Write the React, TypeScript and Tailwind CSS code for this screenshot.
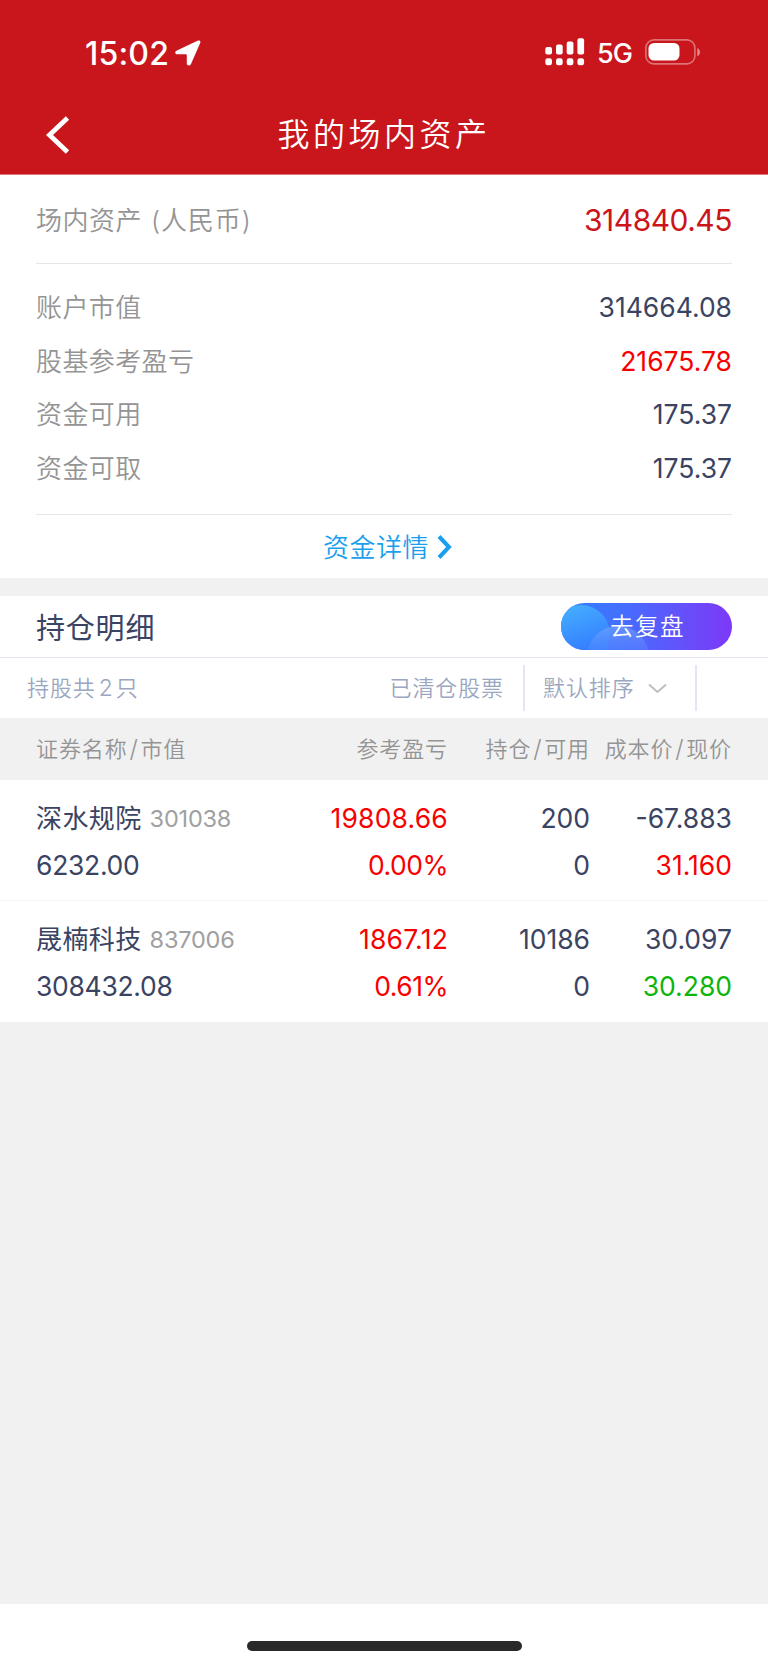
import { clsx } from "clsx";

type Tone = "ink" | "red" | "brand" | "green";

const tones: Record<Tone, string> = {
  ink: "text-[#3a4362]",
  red: "text-[#f80000]",
  brand: "text-[#cb151b]",
  green: "text-[#0cb40c]",
};

const summary: { label: string; value: string; tone: Tone }[] = [
  { label: "账户市值", value: "314664.08", tone: "ink" },
  { label: "股基参考盈亏", value: "21675.78", tone: "red" },
  { label: "资金可用", value: "175.37", tone: "ink" },
  { label: "资金可取", value: "175.37", tone: "ink" },
];

const holdings: {
  name: string;
  code: string;
  marketValue: string;
  profit: string;
  percent: string;
  amount: string;
  usable: string;
  cost: string;
  price: string;
  priceTone: Tone;
}[] = [
  {
    name: "深水规院",
    code: "301038",
    marketValue: "6232.00",
    profit: "19808.66",
    percent: "0.00%",
    amount: "200",
    usable: "0",
    cost: "-67.883",
    price: "31.160",
    priceTone: "red",
  },
  {
    name: "晟楠科技",
    code: "837006",
    marketValue: "308432.08",
    profit: "1867.12",
    percent: "0.61%",
    amount: "10186",
    usable: "0",
    cost: "30.097",
    price: "30.280",
    priceTone: "green",
  },
];

const StatusBar = () => (
  <div className="flex h-[104px] items-center justify-between pl-[85px] pr-[67px] text-white">
    <div className="flex items-center gap-[6px] pt-px">
      <span className="pt-[2px] text-[32px] font-[550] leading-[38px] tracking-[0.200px]">15:02</span>
      <svg width="26" height="26" viewBox="0 0 26 26" fill="currentColor">
        <path d="M1.400 10.700 23 .6c1.600-.7 2.900.6 2.300 2.100L15.900 24.300c-.9 1.900-4.100 1.700-4.100-.7v-8.300c0-.7-.4-1.100-1.100-1.100H2.300c-2.400 0-2.700-2.700-.9-3.500Z" />
      </svg>
    </div>
    <div className="flex items-center">
      <svg width="40" height="28" viewBox="0 0 40 28" fill="currentColor">
        <rect x="0.300" y="9" width="6.700" height="7.500" rx="2" />
        <rect x="11" y="6.500" width="6.700" height="10" rx="2" />
        <rect x="21.700" y="3.500" width="6.700" height="13" rx="2" />
        <rect x="32.400" y="0.300" width="6.700" height="16.200" rx="2" />
        <rect x="0.300" y="20.300" width="6.700" height="7" rx="2.400" />
        <rect x="11" y="20.300" width="6.700" height="7" rx="2.400" />
        <rect x="21.700" y="20.300" width="6.700" height="7" rx="2.400" />
        <rect x="32.400" y="20.300" width="6.700" height="7" rx="2.400" />
      </svg>
      <span className="ml-[12px] w-[36px] pt-[3px] text-[27px] font-[450] leading-8 tracking-[-0.900px]">5G</span>
      <svg className="ml-[12px]" width="56" height="26" viewBox="0 0 56 26" fill="none">
        <rect x="0.900" y="0.900" width="49" height="24" rx="8" stroke="#fff" strokeOpacity="0.400" strokeWidth="1.600" />
        <rect x="3.500" y="4" width="31" height="17.600" rx="5.500" fill="#fff" />
        <path d="M52.300 9v8.500c1.600-.7 2.700-2.300 2.700-4.200s-1.100-3.600-2.700-4.300Z" fill="#fff" fillOpacity="0.500" />
      </svg>
    </div>
  </div>
);

const TitleBar = () => (
  <div className="grid h-[62px] grid-cols-[140px_1fr_140px] items-center text-white">
    <svg className="ml-[46px]" width="24" height="38" viewBox="0 0 24 38" fill="none">
      <path d="M21.500 2 3.500 19l18 17" stroke="currentColor" strokeWidth="4.800" />
    </svg>
    <h1 className="text-center text-[32px] font-[350] leading-[40px] tracking-[3.500px]">我的场内资产</h1>
  </div>
);

const ReviewButton = () => (
  <button className="relative h-[47px] w-[171px] overflow-hidden rounded-full">
    <svg className="absolute inset-0" width="171" height="47" viewBox="0 0 171 47">
      <defs>
        <linearGradient id="base" x1="0" x2="1" y1="0" y2="0">
          <stop offset="0" stopColor="#3180ff" />
          <stop offset="0.350" stopColor="#446ffe" />
          <stop offset="1" stopColor="#7e38f8" />
        </linearGradient>
        <linearGradient id="big" x1="0" x2="0.350" y1="0" y2="1">
          <stop offset="0" stopColor="#47b4ff" />
          <stop offset="0.850" stopColor="#3580ff" />
        </linearGradient>
        <linearGradient id="small" x1="0" x2="0" y1="0" y2="1">
          <stop offset="0" stopColor="#7aa8ff" stopOpacity="0.600" />
          <stop offset="0.450" stopColor="#5a8cff" stopOpacity="0.300" />
        </linearGradient>
      </defs>
      <rect width="171" height="47" fill="url(#base)" />
      <circle cx="20" cy="31" r="29" fill="url(#big)" />
      <circle cx="57" cy="54" r="31" fill="url(#small)" />
    </svg>
    <span className="relative pl-[2px] text-[23.500px] font-[350] leading-[46px] tracking-[1.500px] text-white">去复盘</span>
  </button>
);

const Slash = () => <span className="mx-[1.800px] inline-block text-[24px] leading-none">/</span>;

const Holding = ({ item }: { item: (typeof holdings)[number] }) => (
  <div className="grid h-[121px] grid-cols-[245px_167px_142px_142px] content-center gap-y-[6px] border-b border-[#f5f5f5] px-9 pt-[2px] text-right text-[26.500px] font-[370] leading-[40px] text-[#3a4362] last:border-b-0">
    <div className="flex text-left">
      <span className="pt-px text-[26px] tracking-[0.400px]">{item.name}</span>
      <span className="ml-[8px] pt-px text-[23.500px] tracking-[-0.200px] text-[#a0a0a0]">{item.code}</span>
    </div>
    <div className={clsx("tracking-[0.200px]", tones.red)}>{item.profit}</div>
    <div>{item.amount}</div>
    <div>{item.cost}</div>
    <div className="text-left tracking-[-0.300px]">{item.marketValue}</div>
    <div className={clsx("tracking-[-0.500px]", tones.red)}>{item.percent}</div>
    <div>{item.usable}</div>
    <div className={tones[item.priceTone]}>{item.price}</div>
  </div>
);

const App = () => {
  return (
    <div className="flex h-[1665px] w-[768px] flex-col bg-[#f1f1f1] font-[Inter,'Noto_Sans_CJK_SC',sans-serif]">
      <header className="h-[175px] border-b border-[#df757a] bg-[#c8161c]">
        <StatusBar />
        <TitleBar />
      </header>

      <section className="h-[403px] bg-white px-9">
        <div className="flex h-[89px] items-center justify-between border-b border-[#e6e6e6] pt-[2px]">
          <span className="text-[26px] font-[350] tracking-[0.500px] text-[#949494]">
            场内资产<span className="ml-[9px] tracking-[0.900px]">(人民币)</span>
          </span>
          <span className="text-[30px] font-[370] tracking-[-0.500px] text-[#cb151b]">314840.45</span>
        </div>
        <div className="h-[251px] border-b border-[#e6e6e6] pt-[17px]">
          {summary.map((row) => (
            <div key={row.label} className="flex h-[53.600px] items-center justify-between">
              <span className="text-[26px] font-[350] tracking-[0.400px] text-[#949494]">{row.label}</span>
              <span className={clsx("text-[26.500px] font-[370]", tones[row.tone])}>{row.value}</span>
            </div>
          ))}
        </div>
        <div className="flex h-[63px] items-center justify-center gap-[8px] pl-[7px] pt-px text-[#1a9fee]">
          <span className="text-[26px] font-[350] tracking-[0.500px]">资金详情</span>
          <svg width="15" height="24" viewBox="0 0 15 24" fill="none">
            <path d="M2 1.500 12 12 2 22.500" stroke="currentColor" strokeWidth="4" />
          </svg>
        </div>
      </section>

      <section className="mt-[18px] bg-white">
        <div className="flex h-[62px] items-center justify-between border-b border-[#dfe4f0] px-9">
          <h2 className="pt-[4px] text-[29px] font-[370] tracking-[0.800px] text-[#3a4362]">持仓明细</h2>
          <ReviewButton />
        </div>
        <div className="flex h-[60px] items-center pl-[27px] text-[22px] font-[350] tracking-[0.900px] text-[#9ba7c0]">
          <span>
            持股共<span className="ml-[3px] mr-[2px] text-[23px]">2</span>只
          </span>
          <span className="ml-auto pr-[19px]">已清仓股票</span>
          <div className="flex h-[46px] w-[174px] items-center border-x-2 border-[#e2e7f1] pl-[18px]">
            <span>默认排序</span>
            <svg className="ml-[13px]" width="19" height="11" viewBox="0 0 19 11" fill="none">
              <path d="m1 1.500 8.500 7.500L18 1.500" stroke="#bdbec6" strokeWidth="2" />
            </svg>
          </div>
          <div className="w-[71px]" />
        </div>
        <div className="grid h-[62px] grid-cols-[245px_167px_142px_142px] items-center whitespace-nowrap bg-[#f1f1f1] px-9 text-right text-[22px] font-[350] tracking-[0.900px] text-[#949494]">
          <span className="text-left">
            证券名称
            <Slash />
            市值
          </span>
          <span>参考盈亏</span>
          <span>
            持仓
            <Slash />
            可用
          </span>
          <span>
            成本价
            <Slash />
            现价
          </span>
        </div>
        {holdings.map((item) => (
          <Holding key={item.code} item={item} />
        ))}
      </section>

      <footer className="mt-auto flex h-[61px] justify-center bg-white pt-[37px]">
        <div className="h-[10px] w-[275px] rounded-full bg-[#292929]" />
      </footer>
    </div>
  );
};

export default App;
